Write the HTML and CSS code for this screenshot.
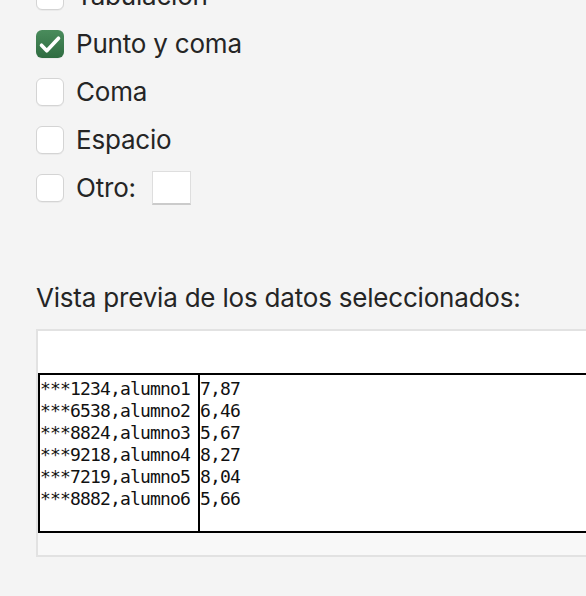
FILE: index.html
```html
<!DOCTYPE html>
<html lang="es">
<head>
<meta charset="utf-8">
<title>Vista previa</title>
<link rel="stylesheet" href="styles.css">
</head>
<body>
<div class="page">
  <div class="options">
    <div class="opt"><span class="cb"></span><span class="lbl">Tabulación</span></div>
    <div class="opt"><span class="cb checked"><svg viewBox="0 0 28 28" width="28" height="28"><path d="M5.5 15.2 L10.8 20.8 L22.5 8.2" fill="none" stroke="#fff" stroke-width="3.6" stroke-linecap="round" stroke-linejoin="round"/></svg></span><span class="lbl">Punto y coma</span></div>
    <div class="opt"><span class="cb"></span><span class="lbl">Coma</span></div>
    <div class="opt"><span class="cb"></span><span class="lbl">Espacio</span></div>
    <div class="opt"><span class="cb"></span><span class="lbl">Otro:</span><span class="field"></span></div>
  </div>
  <div class="heading">Vista previa de los datos seleccionados:</div>
  <div class="preview">
    <div class="blank"></div>
    <div class="table">
      <div class="col c1">***1234,alumno1<br>***6538,alumno2<br>***8824,alumno3<br>***9218,alumno4<br>***7219,alumno5<br>***8882,alumno6</div>
      <div class="col c2">7,87<br>6,46<br>5,67<br>8,27<br>8,04<br>5,66</div>
    </div>
    <div class="foot"></div>
  </div>
</div>
</body>
</html>
```

FILE: styles.css
```css
html, body {
  margin: 0;
  padding: 0;
  background: #f4f4f4;
  overflow: hidden;
}
body {
  font-family: Inter, "Noto Sans", sans-serif;
  color: #252525;
}
.page {
  padding-left: 36px;
  height: 596px;
}
.options {
  display: flex;
  flex-direction: column;
  gap: 20px;
  margin-top: -18px;
}
.opt {
  display: flex;
  align-items: center;
  height: 28px;
}
.cb {
  box-sizing: border-box;
  width: 28px;
  height: 28px;
  border-radius: 6px;
  background: #fff;
  border: 1px solid #d4d4d4;
  box-shadow: 0 1px 0 rgba(0,0,0,0.04);
  flex: none;
}
.cb.checked {
  border: none;
  background: linear-gradient(#4a8c5c, #2f6c41);
}
.cb svg { display: block; }
.lbl {
  margin-left: 12px;
  font-size: 26px;
  line-height: 28px;
  letter-spacing: -0.2px;
}
.field {
  box-sizing: border-box;
  margin-left: 16px;
  width: 39px;
  height: 34px;
  background: #fff;
  border: 1px solid #dedede;
  border-bottom: 2px solid #cbcbcb;
}
.heading {
  margin-top: 80px;
  font-size: 26px;
  line-height: 32px;
  letter-spacing: -0.2px;
}
.preview {
  margin-top: 15px;
  width: 600px;
  border: 2px solid #e2e2e2;
  border-right: none;
  background: #f8f8f8;
}
.blank {
  height: 42px;
  background: #fff;
}
.table {
  display: flex;
  height: 156px;
  border: 2px solid #000;
  border-right: none;
  background: #fff;
}
.col {
  font-family: "DejaVu Sans Mono", "Liberation Mono", monospace;
  font-size: 18px;
  line-height: 22px;
  letter-spacing: -0.84px;
  color: #111;
  padding-top: 3px;
  white-space: nowrap;
}
.c1 {
  width: 158px;
  border-right: 2px solid #000;
}
.foot {
  height: 22px;
}
```
